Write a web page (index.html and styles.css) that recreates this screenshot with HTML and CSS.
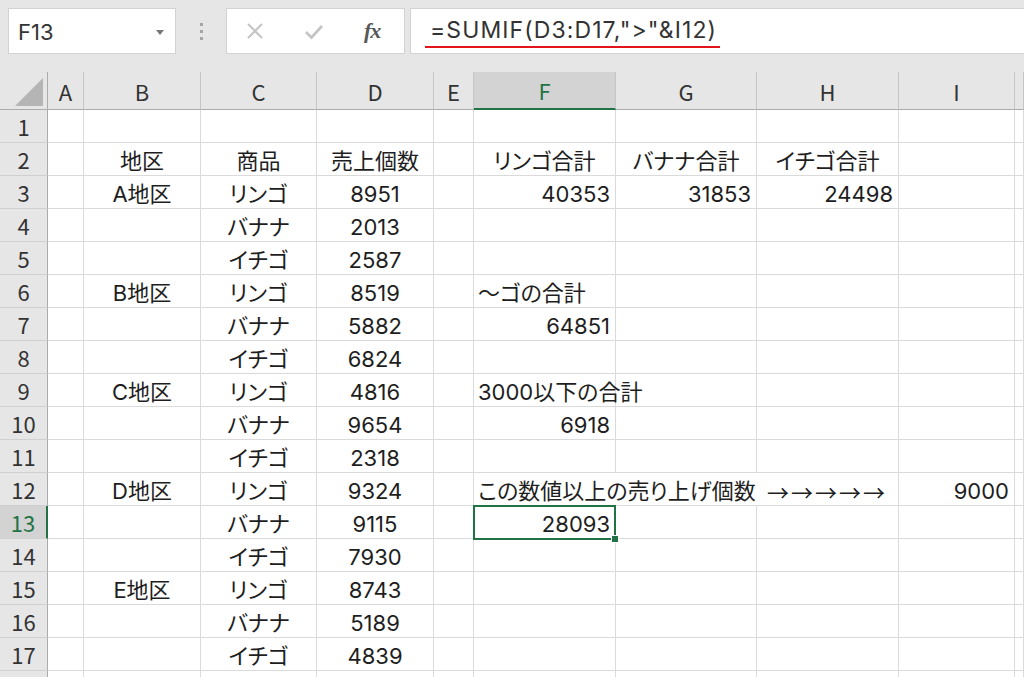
FILE: index.html
```html
<!DOCTYPE html>
<html lang="ja">
<head>
<meta charset="utf-8">
<title>SUMIF</title>
<link rel="stylesheet" href="styles.css">
</head>
<body>
<div class="toolbar">
  <div class="namebox"><span>F13</span><span class="caret"></span></div>
  <div class="grip"><i></i><i></i><i></i></div>
  <div class="fnbox">
    <svg class="ico" width="18" height="18" viewBox="0 0 18 18"><path d="M2 2L16 16M16 2L2 16" stroke="#c4c4c4" stroke-width="2" fill="none"/></svg>
    <svg class="ico" width="20" height="18" viewBox="0 0 20 18"><path d="M2 10L7.5 15.5L18 4" stroke="#c4c4c4" stroke-width="2.6" fill="none"/></svg>
    <span class="fx">fx</span>
  </div>
  <div class="formula"><span class="ftext">=SUMIF(D3:D17,"&gt;"&amp;I12)</span></div>
</div>
<div class="sheet">
  <div class="corner"><svg width="48" height="37" viewBox="0 0 48 37"><polygon points="15,34 43,34 43,6" fill="#b5b5b5"/></svg></div>
  <div class="ch">A</div><div class="ch">B</div><div class="ch">C</div><div class="ch">D</div><div class="ch">E</div><div class="ch sel">F</div><div class="ch">G</div><div class="ch">H</div><div class="ch">I</div><div class="ch"></div>

  <div class="rh">1</div><div class="c"></div><div class="c"></div><div class="c"></div><div class="c"></div><div class="c"></div><div class="c"></div><div class="c"></div><div class="c"></div><div class="c"></div><div class="c"></div>

  <div class="rh">2</div><div class="c"></div><div class="c">地区</div><div class="c">商品</div><div class="c">売上個数</div><div class="c"></div><div class="c">リンゴ合計</div><div class="c">バナナ合計</div><div class="c">イチゴ合計</div><div class="c"></div><div class="c"></div>

  <div class="rh">3</div><div class="c"></div><div class="c">A地区</div><div class="c">リンゴ</div><div class="c">8951</div><div class="c"></div><div class="c r">40353</div><div class="c r">31853</div><div class="c r">24498</div><div class="c"></div><div class="c"></div>

  <div class="rh">4</div><div class="c"></div><div class="c"></div><div class="c">バナナ</div><div class="c">2013</div><div class="c"></div><div class="c"></div><div class="c"></div><div class="c"></div><div class="c"></div><div class="c"></div>

  <div class="rh">5</div><div class="c"></div><div class="c"></div><div class="c">イチゴ</div><div class="c">2587</div><div class="c"></div><div class="c"></div><div class="c"></div><div class="c"></div><div class="c"></div><div class="c"></div>

  <div class="rh">6</div><div class="c"></div><div class="c">B地区</div><div class="c">リンゴ</div><div class="c">8519</div><div class="c"></div><div class="c l">～ゴの合計</div><div class="c"></div><div class="c"></div><div class="c"></div><div class="c"></div>

  <div class="rh">7</div><div class="c"></div><div class="c"></div><div class="c">バナナ</div><div class="c">5882</div><div class="c"></div><div class="c r">64851</div><div class="c"></div><div class="c"></div><div class="c"></div><div class="c"></div>

  <div class="rh">8</div><div class="c"></div><div class="c"></div><div class="c">イチゴ</div><div class="c">6824</div><div class="c"></div><div class="c"></div><div class="c"></div><div class="c"></div><div class="c"></div><div class="c"></div>

  <div class="rh">9</div><div class="c"></div><div class="c">C地区</div><div class="c">リンゴ</div><div class="c">4816</div><div class="c"></div><div class="c l">3000以下の合計</div><div class="c"></div><div class="c"></div><div class="c"></div><div class="c"></div>

  <div class="rh">10</div><div class="c"></div><div class="c"></div><div class="c">バナナ</div><div class="c">9654</div><div class="c"></div><div class="c r">6918</div><div class="c"></div><div class="c"></div><div class="c"></div><div class="c"></div>

  <div class="rh">11</div><div class="c"></div><div class="c"></div><div class="c">イチゴ</div><div class="c">2318</div><div class="c"></div><div class="c"></div><div class="c"></div><div class="c"></div><div class="c"></div><div class="c"></div>

  <div class="rh">12</div><div class="c"></div><div class="c">D地区</div><div class="c">リンゴ</div><div class="c">9324</div><div class="c"></div><div class="c l nb">この数値以上の売り上げ個数</div><div class="c nb"></div><div class="c l arrows">→→→→→</div><div class="c r">9000</div><div class="c"></div>

  <div class="rh sel">13</div><div class="c"></div><div class="c"></div><div class="c">バナナ</div><div class="c">9115</div><div class="c"></div><div class="c r active">28093</div><div class="c"></div><div class="c"></div><div class="c"></div><div class="c"></div>

  <div class="rh">14</div><div class="c"></div><div class="c"></div><div class="c">イチゴ</div><div class="c">7930</div><div class="c"></div><div class="c"></div><div class="c"></div><div class="c"></div><div class="c"></div><div class="c"></div>

  <div class="rh">15</div><div class="c"></div><div class="c">E地区</div><div class="c">リンゴ</div><div class="c">8743</div><div class="c"></div><div class="c"></div><div class="c"></div><div class="c"></div><div class="c"></div><div class="c"></div>

  <div class="rh">16</div><div class="c"></div><div class="c"></div><div class="c">バナナ</div><div class="c">5189</div><div class="c"></div><div class="c"></div><div class="c"></div><div class="c"></div><div class="c"></div><div class="c"></div>

  <div class="rh">17</div><div class="c"></div><div class="c"></div><div class="c">イチゴ</div><div class="c">4839</div><div class="c"></div><div class="c"></div><div class="c"></div><div class="c"></div><div class="c"></div><div class="c"></div>

  <div class="rh"></div><div class="c"></div><div class="c"></div><div class="c"></div><div class="c"></div><div class="c"></div><div class="c"></div><div class="c"></div><div class="c"></div><div class="c"></div><div class="c"></div>
</div>
</body>
</html>
```
FILE: styles.css
```css
html, body {
  margin: 0;
  padding: 0;
}
body {
  width: 1024px;
  height: 677px;
  overflow: hidden;
  background: #ffffff;
  font-family: "Noto Sans CJK JP", "Noto Sans", sans-serif;
  font-feature-settings: "palt";
  color: #222;
}

/* ---------- formula bar ---------- */
.toolbar {
  height: 72px;
  box-sizing: border-box;
  background: #e6e6e6;
  display: flex;
  align-items: flex-start;
  padding: 8px 0 0 8px;
}
.namebox {
  width: 168px;
  height: 46px;
  box-sizing: border-box;
  background: #fff;
  border: 1px solid #d2d2d2;
  display: flex;
  align-items: center;
  justify-content: space-between;
  padding: 2px 11px 0 9px;
  font-family: "Inter", "Noto Sans CJK JP", sans-serif;
  font-size: 22px;
  color: #333;
}
.caret {
  width: 0;
  height: 0;
  border-left: 4px solid transparent;
  border-right: 4px solid transparent;
  border-top: 5px solid #777;
}
.grip {
  width: 50px;
  height: 46px;
  display: flex;
  flex-direction: column;
  align-items: center;
  justify-content: center;
  gap: 4px;
}
.grip i {
  display: block;
  width: 3px;
  height: 3px;
  background: #a6a6a6;
}
.fnbox {
  width: 179px;
  height: 46px;
  box-sizing: border-box;
  background: #fff;
  border: 1px solid #d2d2d2;
  display: flex;
  align-items: center;
  padding-left: 19px;
  gap: 40px;
}
.ico {
  display: block;
}
.fx {
  font-family: "Liberation Serif", serif;
  font-style: italic;
  font-weight: bold;
  font-size: 22px;
  color: #585858;
  letter-spacing: -1px;
}
.formula {
  flex: 1;
  margin-left: 5px;
  height: 46px;
  box-sizing: border-box;
  background: #fff;
  border: 1px solid #d2d2d2;
  border-right: none;
  padding-left: 14px;
  display: flex;
  align-items: flex-start;
}
.ftext {
  display: inline-block;
  margin-top: 8px;
  padding: 0 3px 2px 5px;
  font-family: "Inter", "Noto Sans CJK JP", sans-serif;
  font-size: 23px;
  letter-spacing: 1.1px;
  line-height: 27px;
  color: #333;
  border-bottom: 2px solid #e3141a;
}

/* ---------- sheet ---------- */
.sheet {
  display: grid;
  grid-template-columns: 48px 36px 117px 116px 117px 40px 142px 141px 142px 116px 1fr;
  grid-template-rows: 38px;
  grid-auto-rows: 33px;
}
.corner {
  background: #e6e6e6;
  border-right: 1px solid #ababab;
  border-bottom: 1px solid #ababab;
  box-sizing: border-box;
}
.corner svg {
  display: block;
}
.ch {
  background: #e6e6e6;
  border-right: 1px solid #c6c6c6;
  border-bottom: 1px solid #ababab;
  box-sizing: border-box;
  display: flex;
  align-items: center;
  justify-content: center;
  font-size: 22px;
  color: #333;
}
.ch.sel {
  background: #d3d3d3;
  color: #217346;
  border-bottom: 2px solid #217346;
}
.rh {
  background: #e6e6e6;
  border-right: 1px solid #ababab;
  border-bottom: 1px solid #d0d0d0;
  box-sizing: border-box;
  display: flex;
  align-items: center;
  justify-content: center;
  font-size: 22px;
  color: #333;
}
.rh.sel {
  background: #d3d3d3;
  color: #217346;
  border-right: 2px solid #217346;
}
.c {
  border-right: 1px solid #dadada;
  border-bottom: 1px solid #dadada;
  box-sizing: border-box;
  display: flex;
  align-items: center;
  justify-content: center;
  padding-top: 4px;
  font-family: "Inter", "Noto Sans CJK JP", sans-serif;
  font-size: 22px;
  line-height: 1;
  color: #1e1e1e;
  white-space: nowrap;
  min-width: 0;
}
.c.r {
  justify-content: flex-end;
  padding-right: 5px;
}
.c.l {
  justify-content: flex-start;
  padding-left: 4px;
}
.c.nb {
  border-right-color: transparent;
}
.c.arrows {
  font-family: "Noto Sans CJK JP", sans-serif;
  padding-left: 10px;
  letter-spacing: 2px;
}
.c.active {
  position: relative;
}
.c.active::before {
  content: "";
  position: absolute;
  left: -1px;
  top: -1px;
  right: -1px;
  bottom: -2px;
  border: 2px solid #217346;
}
.c.active::after {
  content: "";
  position: absolute;
  right: -4px;
  bottom: -5px;
  width: 6px;
  height: 6px;
  background: #217346;
  border: 1px solid #fff;
}
```
